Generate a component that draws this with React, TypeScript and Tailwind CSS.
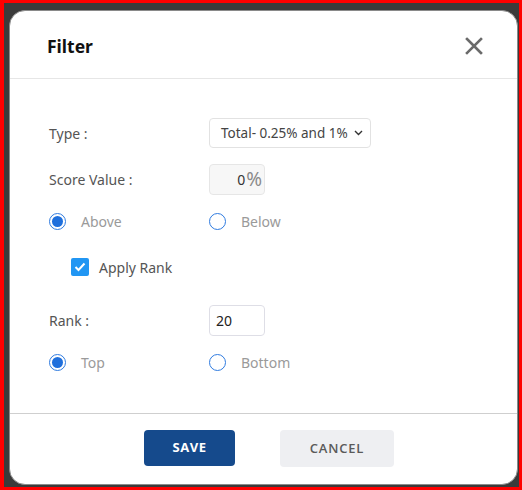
import React, { useState } from 'react';

const font = { fontFamily: '"Noto Sans", "Open Sans", Arial, sans-serif' };

function Radio({ checked, label, onClick }: { checked: boolean; label: string; onClick: () => void }) {
  return (
    <button type="button" onClick={onClick} className="flex items-center gap-[15px] text-[14px] text-[#9a9a9a]">
      <span className="flex h-[17px] w-[17px] items-center justify-center rounded-full border-[1.5px] border-[#2f7be0] bg-white">
        {checked && <span className="h-[11px] w-[11px] rounded-full bg-[#1f6fdc]" />}
      </span>
      <span>{label}</span>
    </button>
  );
}

export default function App() {
  const [dir, setDir] = useState<'above' | 'below'>('above');
  const [pos, setPos] = useState<'top' | 'bottom'>('top');
  const [applyRank, setApplyRank] = useState(true);

  return (
    <div
      className="flex h-[490px] w-[522px] border-b-[3px] border-l-4 border-r-[3px] border-t-[3px] border-[#ff0000] bg-[#3b3b3b] pb-[2px] pl-[5px] pr-px pt-[7px]"
      style={font}
    >
      <div className="flex flex-1 flex-col overflow-hidden rounded-[16px] border border-[#8a8a8a] bg-white">
        {/* Header */}
        <div className="flex h-[67px] items-center justify-between pl-[37px] pr-[34px] pt-[3px]">
          <h2 className="text-[17.5px] font-bold text-[#111]">Filter</h2>
          <button type="button" className="p-0">
            <svg width="18" height="18" viewBox="0 0 18 18" fill="none" stroke="#6b6b6b" strokeWidth="2.6" strokeLinecap="square">
              <path d="M2 2 L16 16 M16 2 L2 16" />
            </svg>
          </button>
        </div>
        <div className="h-px bg-[#e6e6e6]" />

        {/* Body */}
        <div className="flex flex-1 flex-col pl-[39px] pt-[39px] text-[14px]">
          <div className="flex h-[30px] items-center">
            <span className="w-[160px] text-[#555]">Type :</span>
            <div className="flex h-[30px] w-[162px] items-center justify-between rounded-[4px] border border-[#e2e2e2] pl-[11px] pr-[7px] text-[#444]">
              <span className="text-[13.5px]">Total- 0.25% and 1%</span>
              <svg width="9" height="6" viewBox="0 0 9 6" fill="none" stroke="#333" strokeWidth="1.4">
                <path d="M1 1 L4.5 4.5 L8 1" />
              </svg>
            </div>
          </div>

          <div className="mt-[16px] flex h-[31px] items-center">
            <span className="w-[160px] text-[#555]">Score Value :</span>
            <div className="flex h-[31px] w-[56px] items-center justify-end rounded-[4px] border border-[#e6e6e6] bg-[#f7f7f7] pr-[2px] text-[#333]">
              <span>0</span>
              <span className="ml-px text-[19px] leading-none text-[#8a8a8a]">%</span>
            </div>
          </div>

          <div className="mt-[16px] flex h-[20px] items-center">
            <div className="w-[160px]">
              <Radio checked={dir === 'above'} label="Above" onClick={() => setDir('above')} />
            </div>
            <Radio checked={dir === 'below'} label="Below" onClick={() => setDir('below')} />
          </div>

          <div className="mt-[26px] flex h-[20px] items-center pl-[22px]">
            <button type="button" onClick={() => setApplyRank(!applyRank)} className="flex items-center gap-[10px] text-[14px] text-[#555]">
              <span className="flex h-[18px] w-[18px] items-center justify-center rounded-[2px] bg-[#2196f3]">
                {applyRank && (
                  <svg width="12" height="10" viewBox="0 0 12 10" fill="none" stroke="#fff" strokeWidth="2">
                    <path d="M1.5 5 L4.5 8 L10.5 1.5" />
                  </svg>
                )}
              </span>
              <span>Apply Rank</span>
            </button>
          </div>

          <div className="mt-[28px] flex h-[31px] items-center">
            <span className="w-[160px] text-[#555]">Rank :</span>
            <div className="flex h-[31px] w-[56px] items-center rounded-[4px] border border-[#dedee6] pl-[6px] text-[#222]">
              20
            </div>
          </div>

          <div className="mt-[16px] flex h-[20px] items-center">
            <div className="w-[160px]">
              <Radio checked={pos === 'top'} label="Top" onClick={() => setPos('top')} />
            </div>
            <Radio checked={pos === 'bottom'} label="Bottom" onClick={() => setPos('bottom')} />
          </div>
        </div>

        {/* Footer */}
        <div className="h-px bg-[#cfcfcf]" />
        <div className="flex justify-center gap-[45px] pb-[17px] pl-[11px] pt-[16px]" style={{ fontFamily: '"Open Sans", "Noto Sans", Arial, sans-serif' }}>
          <button type="button" className="h-[36px] w-[91px] rounded-[4px] bg-[#154a8c] text-[13px] font-bold tracking-[0.5px] text-white">
            SAVE
          </button>
          <button type="button" className="h-[37px] w-[114px] rounded-[4px] bg-[#eeeff2] text-[13px] font-semibold tracking-[0.8px] text-[#5a5a5a]">
            CANCEL
          </button>
        </div>
      </div>
    </div>
  );
}
